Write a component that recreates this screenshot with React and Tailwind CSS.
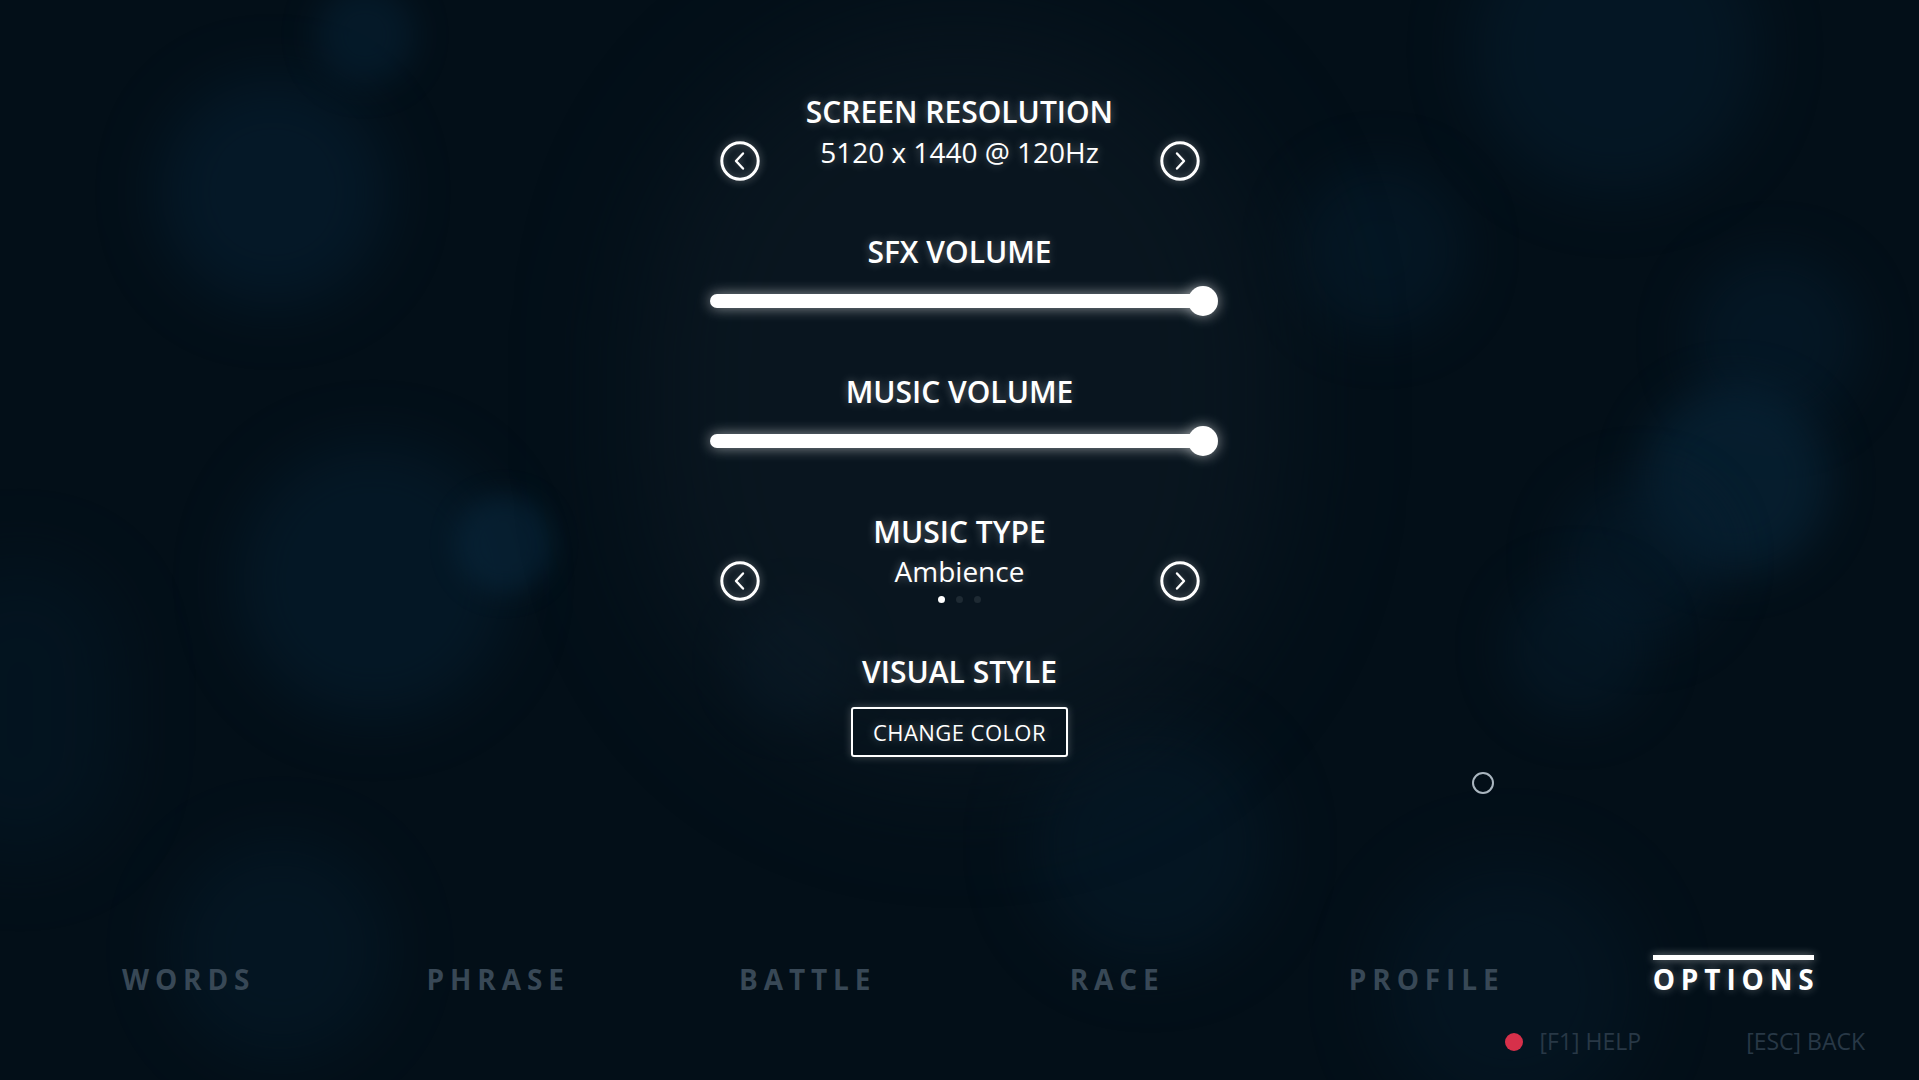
import React from 'react';

const glow = '[text-shadow:0_0_10px_rgba(255,255,255,0.35)]';

function Arrow({ dir }) {
  return (
    <svg width="40" height="40" viewBox="0 0 40 40" className="drop-shadow-[0_0_4px_rgba(255,255,255,0.45)]">
      <circle cx="20" cy="20" r="18.2" fill="none" stroke="#fff" strokeWidth="3" />
      {dir === 'left' ? (
        <path d="M23 12.5 L16 20 L23 27.5" fill="none" stroke="#fff" strokeWidth="2.4" strokeLinecap="round" strokeLinejoin="round" />
      ) : (
        <path d="M17 12.5 L24 20 L17 27.5" fill="none" stroke="#fff" strokeWidth="2.4" strokeLinecap="round" strokeLinejoin="round" />
      )}
    </svg>
  );
}

function Title({ children }) {
  return <div className={`text-[30px] leading-none font-semibold text-white ${glow}`}>{children}</div>;
}

function Slider() {
  return (
    <div className="relative w-[508px] h-[30px] ml-[8px] mt-[19px]">
      <div className="absolute left-0 right-[14px] top-[8px] h-[14px] rounded-full bg-white shadow-[0_0_14px_rgba(255,255,255,0.55)]" />
      <div className="absolute right-0 top-0 w-[30px] h-[30px] rounded-full bg-white shadow-[0_0_14px_rgba(255,255,255,0.55)]" />
    </div>
  );
}

function Picker({ title, value, dots, gap }) {
  return (
    <div className="flex w-[480px] items-start">
      <div className="mt-[44px]"><Arrow dir="left" /></div>
      <div className="flex-1 flex flex-col items-center">
        <Title>{title}</Title>
        <div className={`${gap} text-[28px] leading-none text-white ${glow}`}>{value}</div>
        {dots && (
          <div className="mt-[11px] flex gap-[11px]">
            <span className="w-[7px] h-[7px] rounded-full bg-white" />
            <span className="w-[7px] h-[7px] rounded-full bg-[#1e2a33]" />
            <span className="w-[7px] h-[7px] rounded-full bg-[#1e2a33]" />
          </div>
        )}
      </div>
      <div className="mt-[44px]"><Arrow dir="right" /></div>
    </div>
  );
}

const tabs = ['WORDS', 'PHRASE', 'BATTLE', 'RACE', 'PROFILE', 'OPTIONS'];

export default function App() {
  return (
    <div
      className="relative w-[1919px] h-[1080px] overflow-hidden bg-[#030f18] flex flex-col"
      style={{ fontFamily: '"Open Sans", "Noto Sans", sans-serif' }}
    >
      {/* bokeh background */}
      <div className="absolute inset-0 pointer-events-none">
        <div className="absolute left-[158px] top-[77px] w-[230px] h-[230px] rounded-full bg-[#072237] opacity-50 blur-[30px]" />
        <div className="absolute left-[315px] top-[-15px] w-[100px] h-[100px] rounded-full bg-[#072439] opacity-50 blur-[16px]" />
        <div className="absolute left-[236px] top-[443px] w-[275px] h-[275px] rounded-full bg-[#061f31] opacity-55 blur-[30px]" />
        <div className="absolute left-[455px] top-[495px] w-[98px] h-[98px] rounded-full bg-[#08263b] opacity-60 blur-[12px]" />
        <div className="absolute left-[170px] top-[840px] w-[220px] h-[220px] rounded-full bg-[#061e2f] opacity-45 blur-[32px]" />
        <div className="absolute left-[1470px] top-[-95px] w-[290px] h-[290px] rounded-full bg-[#061d2e] opacity-55 blur-[30px]" />
        <div className="absolute left-[1295px] top-[165px] w-[170px] h-[170px] rounded-full bg-[#061d2e] opacity-50 blur-[26px]" />
        <div className="absolute left-[1690px] top-[255px] w-[170px] h-[170px] rounded-full bg-[#061e30] opacity-50 blur-[26px]" />
        <div className="absolute left-[1640px] top-[385px] w-[190px] h-[190px] rounded-full bg-[#082539] opacity-65 blur-[22px]" />
        <div className="absolute left-[1560px] top-[480px] w-[160px] h-[160px] rounded-full bg-[#061d2e] opacity-50 blur-[26px]" />
        <div className="absolute left-[1505px] top-[575px] w-[145px] h-[145px] rounded-full bg-[#061c2c] opacity-50 blur-[24px]" />
        <div className="absolute left-[1030px] top-[725px] w-[240px] h-[240px] rounded-full bg-[#061c2c] opacity-50 blur-[32px]" />
        <div className="absolute left-[735px] top-[600px] w-[120px] h-[120px] rounded-full bg-[#061c2c] opacity-45 blur-[22px]" />
        <div className="absolute left-[1380px] top-[860px] w-[260px] h-[260px] rounded-full bg-[#061b2b] opacity-45 blur-[36px]" />
        <div className="absolute left-[-80px] top-[560px] w-[200px] h-[300px] rounded-full bg-[#051a29] opacity-45 blur-[36px]" />
        <div className="absolute left-[640px] top-[20px] w-[640px] h-[760px] rounded-full bg-[#0d1a24] opacity-60 blur-[60px]" />
      </div>

      {/* cursor */}
      <div className="absolute left-[1472px] top-[772px] w-[22px] h-[22px] rounded-full border-2 border-[#aab6bf]" />

      {/* options panel */}
      <div className="relative flex flex-col items-center pt-[97px]">
        <div className="h-[140px]">
          <Picker title="SCREEN RESOLUTION" value="5120 x 1440 @ 120Hz" gap="mt-[11px]" />
        </div>
        <div className="h-[140px] flex flex-col items-center">
          <Title>SFX VOLUME</Title>
          <Slider />
        </div>
        <div className="h-[140px] flex flex-col items-center">
          <Title>MUSIC VOLUME</Title>
          <Slider />
        </div>
        <div className="h-[140px]">
          <Picker title="MUSIC TYPE" value="Ambience" dots gap="mt-[10px]" />
        </div>
        <div className="h-[140px] flex flex-col items-center">
          <Title>VISUAL STYLE</Title>
          <button className={`mt-[20px] w-[217px] h-[50px] border-2 border-white rounded-[3px] text-[22px] leading-none text-white tracking-[0.02em] shadow-[0_0_8px_rgba(255,255,255,0.25)] ${glow}`}>
            CHANGE COLOR
          </button>
        </div>
      </div>

      {/* bottom tabs */}
      <div className="relative mt-[158px] grid grid-cols-6 px-[31px]">
        {tabs.map((t) => {
          const active = t === 'OPTIONS';
          return (
            <div key={t} className="flex justify-center">
              <div className="flex flex-col items-stretch">
                <div className={active ? 'h-[5px] bg-white shadow-[0_0_8px_rgba(255,255,255,0.5)]' : 'h-[5px]'} />
                <div
                  className={
                    active
                      ? `mt-[5px] text-[28px] leading-none font-bold tracking-[0.21em] mr-[-0.21em] text-white ${glow}`
                      : 'mt-[5px] text-[28px] leading-none font-bold tracking-[0.21em] mr-[-0.21em] text-[#384856]'
                  }
                >
                  {t}
                </div>
              </div>
            </div>
          );
        })}
      </div>

      {/* help row */}
      <div className="relative mt-[37px] flex justify-end items-center pr-[54px]">
        <span className="w-[18px] h-[18px] rounded-full bg-[#d7304a]" />
        <span className="ml-[17px] text-[23px] leading-none text-[#283846]">[F1] HELP</span>
        <span className="ml-[105px] text-[23px] leading-none text-[#283846]">[ESC] BACK</span>
      </div>
    </div>
  );
}
